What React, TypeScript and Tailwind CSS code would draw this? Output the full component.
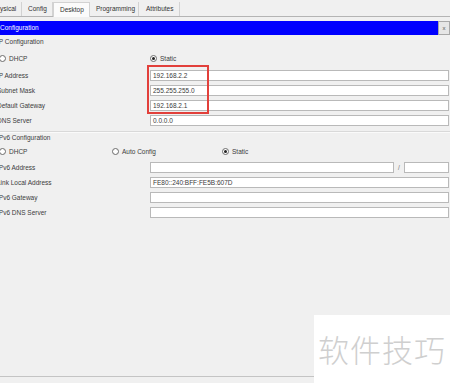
import React from "react";

const font = { fontFamily: '"Liberation Sans", Arial, sans-serif' };

function Radio({ checked = false }: { checked?: boolean }) {
  return (
    <span className="flex h-[7px] w-[7px] items-center justify-center rounded-full border border-[#6b6b6b] bg-white">
      {checked && <span className="h-[3px] w-[3px] rounded-full bg-[#222]" />}
    </span>
  );
}

function Field({ value = "" }: { value?: string }) {
  return (
    <div className="flex h-[11px] flex-1 items-center border border-[#b9b9b9] bg-white pl-[2px] text-[6.5px] text-[#3a3a3a]">
      {value}
    </div>
  );
}

function Row({ label, children }: { label: string; children: React.ReactNode }) {
  return (
    <div className="flex h-[15px] items-center pr-[1px]">
      <div className="w-[153px] shrink-0 -ml-[3px] text-[6.5px] text-[#3c3c3c]">{label}</div>
      {children}
    </div>
  );
}

const tabs = [
  { name: "ysical", w: "w-[22px]", pl: "pl-0" },
  { name: "Config", w: "w-[31px]", pl: "pl-[6px]" },
  { name: "Desktop", w: "w-[37px]", pl: "pl-[6px]", active: true },
  { name: "Programming", w: "w-[49px]", pl: "pl-[6px]" },
  { name: "Attributes", w: "w-[41px]", pl: "pl-[7px]" },
];

export default function App() {
  return (
    <div className="relative h-[383px] w-[450px] overflow-hidden bg-[#f0f0f0]" style={font}>
      <div className="flex flex-col">
        {/* Tabs */}
        <div className="flex h-[17px] items-end border-b border-[#b4b4b4] pt-[3px]">
          {tabs.map((t) => (
            <div
              key={t.name}
              className={`flex h-[14px] ${t.w} ${t.pl} items-center border-r border-[#d2d2d2] text-[6.5px] text-[#333] ${
                t.active ? "-mb-px h-[15px] border-l border-t bg-[#fbfbfb]" : ""
              }`}
            >
              {t.name}
            </div>
          ))}
        </div>

        {/* Title bar */}
        <div className="mt-[4px] flex h-[14px]">
          <div className="flex flex-1 items-center bg-[#0000ff] text-[6.5px] text-white">Configuration</div>
          <div className="flex w-[12px] items-center justify-center border border-[#a8a8a8] bg-[#e6e6e6] text-[6px] text-[#555]">
            x
          </div>
        </div>

        {/* IPv4 */}
        <div className="flex h-[14px] items-center -ml-[3px] text-[6.5px] text-[#3c3c3c]">IP Configuration</div>
        <div className="flex h-[19px] items-center">
          <div className="flex w-[150px] items-center gap-[3px] -ml-[1px]">
            <Radio />
            <span className="text-[6.5px] text-[#3c3c3c]">DHCP</span>
          </div>
          <div className="flex items-center gap-[3px] pl-[1px]">
            <Radio checked />
            <span className="text-[6.5px] text-[#3c3c3c]">Static</span>
          </div>
        </div>
        <Row label="IP Address">
          <Field value="192.168.2.2" />
        </Row>
        <Row label="Subnet Mask">
          <Field value="255.255.255.0" />
        </Row>
        <Row label="Default Gateway">
          <Field value="192.168.2.1" />
        </Row>
        <Row label="DNS Server">
          <Field value="0.0.0.0" />
        </Row>

        <div className="mt-[3px] h-px bg-[#d9d9d9]" />
        <div className="h-px bg-[#fafafa]" />

        {/* IPv6 */}
        <div className="flex h-[10px] items-center -ml-[3px] text-[6.5px] text-[#3c3c3c]">IPv6 Configuration</div>
        <div className="flex h-[17px] items-center">
          <div className="flex w-[112px] items-center gap-[3px] -ml-[1px]">
            <Radio />
            <span className="text-[6.5px] text-[#3c3c3c]">DHCP</span>
          </div>
          <div className="flex w-[111px] items-center gap-[3px] pl-[1px]">
            <Radio />
            <span className="text-[6.5px] text-[#3c3c3c]">Auto Config</span>
          </div>
          <div className="flex items-center gap-[3px]">
            <Radio checked />
            <span className="text-[6.5px] text-[#3c3c3c]">Static</span>
          </div>
        </div>
        <Row label="IPv6 Address">
          <div className="flex flex-1 items-center">
            <Field />
            <span className="w-[10px] text-center text-[6.5px] text-[#777]">/</span>
            <div className="w-[45px]">
              <Field />
            </div>
          </div>
        </Row>
        <Row label="Link Local Address">
          <Field value="FE80::240:BFF:FE5B:607D" />
        </Row>
        <Row label="IPv6 Gateway">
          <Field />
        </Row>
        <Row label="IPv6 DNS Server">
          <Field />
        </Row>

        {/* Bottom */}
        <div className="mt-[156px] h-px bg-[#c4c4c4]" />
      </div>

      {/* Highlight */}
      <div className="absolute left-[147px] top-[65px] h-[49px] w-[62px] border-2 border-[#e2403b]" />

      {/* Watermark */}
      <div
        className="absolute left-[314px] top-[315px] flex h-[68px] w-[136px] items-center justify-center bg-white text-[31px] font-light tracking-[1px] text-[#cfcfcf]"
        style={{ fontFamily: '"Noto Sans CJK SC", sans-serif' }}
      >
        软件技巧
      </div>
    </div>
  );
}
